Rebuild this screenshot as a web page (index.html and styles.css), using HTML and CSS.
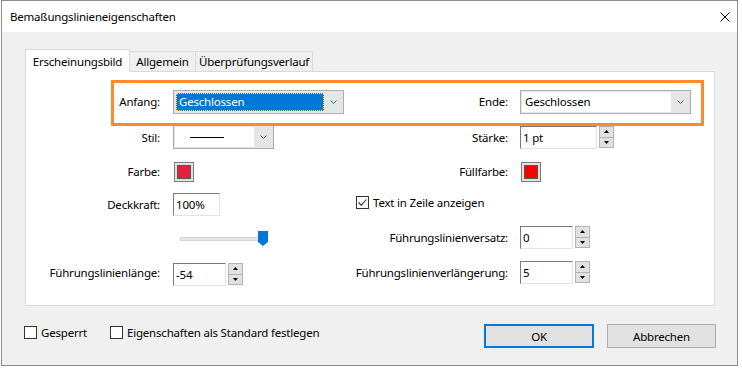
FILE: index.html
```html
<!DOCTYPE html>
<html lang="de">
<head>
    <meta charset="UTF-8">
    <title>Bemaßungslinieneigenschaften</title>
    <link rel="stylesheet" href="styles.css">
</head>
<body>
    <div class="window">
        <div class="titlebar">
            <span class="title">Bemaßungslinieneigenschaften</span>
            <svg class="close" width="10" height="10" viewBox="0 0 10 10">
                <path d="M0.5 0.5L9.5 9.5M9.5 0.5L0.5 9.5" stroke="#000" stroke-width="1" fill="none"/>
            </svg>
        </div>

        <div class="content">
            <!-- tab strip -->
            <div class="tabs">
                <div class="tab active" style="width: 105px">Erscheinungsbild</div>
                <div class="tab" style="width: 67px">Allgemein</div>
                <div class="tab" style="width: 118px">Überprüfungsverlauf</div>
            </div>

            <div class="panel">
                <div class="form">
                    <!-- row 1: highlighted start / end -->
                    <div class="row-focus">
                        <div class="lbl">Anfang:</div>
                        <div class="select" style="width: 171px">
                            <div class="select-value selected">Geschlossen</div>
                            <div class="select-arrow">
                                <svg width="7" height="4" viewBox="0 0 7 4"><path d="M0.5 0.5L3.5 3.5L6.5 0.5" stroke="#606060" fill="none"/></svg>
                            </div>
                        </div>
                        <div class="lbl lbl-r">Ende:</div>
                        <div class="select" style="width: 171px">
                            <div class="select-value">Geschlossen</div>
                            <div class="select-arrow">
                                <svg width="7" height="4" viewBox="0 0 7 4"><path d="M0.5 0.5L3.5 3.5L6.5 0.5" stroke="#606060" fill="none"/></svg>
                            </div>
                        </div>
                    </div>

                    <!-- row 2 -->
                    <div class="lbl">Stil:</div>
                    <div class="select" style="width: 101px">
                        <div class="select-value line-style"><span class="line-sample"></span></div>
                        <div class="select-arrow">
                            <svg width="7" height="4" viewBox="0 0 7 4"><path d="M0.5 0.5L3.5 3.5L6.5 0.5" stroke="#606060" fill="none"/></svg>
                        </div>
                    </div>
                    <div class="lbl lbl-r">Stärke:</div>
                    <div class="spin">
                        <input class="field" type="text" value="1 pt" style="width: 77px">
                        <div class="spin-btns">
                            <div class="spin-btn"><svg width="5" height="3" viewBox="0 0 5 3"><path d="M2.5 0L5 3H0Z" fill="#000"/></svg></div>
                            <div class="spin-btn"><svg width="5" height="3" viewBox="0 0 5 3"><path d="M0 0H5L2.5 3Z" fill="#000"/></svg></div>
                        </div>
                    </div>

                    <!-- row 3 -->
                    <div class="lbl">Farbe:</div>
                    <div class="swatch"><span class="swatch-color" style="background: #e2213c"></span></div>
                    <div class="lbl lbl-r">Füllfarbe:</div>
                    <div class="swatch"><span class="swatch-color" style="background: #ff0000"></span></div>

                    <!-- row 4 -->
                    <div class="lbl">Deckkraft:</div>
                    <div><input class="field" type="text" value="100%" style="width: 47px"></div>
                    <label class="check check-inline">
                        <span class="box">
                            <svg width="11" height="11" viewBox="0 0 11 11"><path d="M1.5 5.5L4.2 8.2L9.5 2.5" stroke="#333" stroke-width="1.1" fill="none"/></svg>
                        </span>
                        Text in Zeile anzeigen
                    </label>

                    <!-- row 5 -->
                    <div class="slider">
                        <div class="track"></div>
                        <svg class="thumb" width="10" height="15" viewBox="0 0 10 15"><path d="M0 0H10V11L5 15L0 11Z" fill="#0078d7"/></svg>
                    </div>
                    <div class="lbl lbl-r">Führungslinienversatz:</div>
                    <div class="spin">
                        <input class="field" type="text" value="0" style="width: 53px">
                        <div class="spin-btns">
                            <div class="spin-btn"><svg width="5" height="3" viewBox="0 0 5 3"><path d="M2.5 0L5 3H0Z" fill="#000"/></svg></div>
                            <div class="spin-btn"><svg width="5" height="3" viewBox="0 0 5 3"><path d="M0 0H5L2.5 3Z" fill="#000"/></svg></div>
                        </div>
                    </div>

                    <!-- row 6 -->
                    <div class="lbl">Führungslinienlänge:</div>
                    <div class="spin spin-low">
                        <input class="field" type="text" value="-54" style="width: 53px">
                        <div class="spin-btns">
                            <div class="spin-btn"><svg width="5" height="3" viewBox="0 0 5 3"><path d="M2.5 0L5 3H0Z" fill="#000"/></svg></div>
                            <div class="spin-btn"><svg width="5" height="3" viewBox="0 0 5 3"><path d="M0 0H5L2.5 3Z" fill="#000"/></svg></div>
                        </div>
                    </div>
                    <div class="lbl lbl-r">Führungslinienverlängerung:</div>
                    <div class="spin">
                        <input class="field" type="text" value="5" style="width: 53px">
                        <div class="spin-btns">
                            <div class="spin-btn"><svg width="5" height="3" viewBox="0 0 5 3"><path d="M2.5 0L5 3H0Z" fill="#000"/></svg></div>
                            <div class="spin-btn"><svg width="5" height="3" viewBox="0 0 5 3"><path d="M0 0H5L2.5 3Z" fill="#000"/></svg></div>
                        </div>
                    </div>
                </div>
            </div>

            <!-- bottom bar -->
            <div class="footer">
                <label class="check"><span class="box"></span>Gesperrt</label>
                <label class="check"><span class="box"></span>Eigenschaften als Standard festlegen</label>
                <div class="buttons">
                    <button class="btn btn-default">OK</button>
                    <button class="btn">Abbrechen</button>
                </div>
            </div>
        </div>
    </div>
</body>
</html>
```

FILE: styles.css
```css
* { box-sizing: border-box; }

body {
    margin: 0;
    background: #fff;
    font-family: "Noto Sans", "Segoe UI", sans-serif;
    font-size: 11.5px;
    letter-spacing: -0.2px;
    color: #000;
}

.window {
    margin-left: 1px;
    width: 737px;
    height: 366px;
    border: 1px solid #8c8c8c;
    background: #f0f0f0;
    display: flex;
    flex-direction: column;
}

.titlebar {
    height: 31px;
    flex-shrink: 0;
    background: #fff;
    display: flex;
    align-items: center;
    justify-content: space-between;
    padding: 0 7px 0 8px;
}

.content {
    flex: 1;
    padding: 17px 22px 0 23px;
}

/* tabs */
.tabs {
    display: flex;
    align-items: flex-end;
    height: 22px;
}

.tab {
    height: 20px;
    margin-left: -1px;
    border: 1px solid #d9d9d9;
    border-bottom: none;
    background: #f0f0f0;
    display: flex;
    align-items: center;
    justify-content: center;
    white-space: nowrap;
}

.tab.active {
    height: 23px;
    margin-left: 0;
    margin-bottom: -1px;
    background: #fff;
    position: relative;
    z-index: 1;
}

.panel {
    height: 235px;
    background: #fff;
    border: 1px solid #d9d9d9;
    padding-top: 12px;
}

/* form grid */
.form {
    display: grid;
    grid-template-columns: 147px 172px 175px 1fr;
    grid-template-rows: 35px 36px 33px 33px 32px 38px;
    align-items: center;
}

.row-focus {
    grid-column: 1 / -1;
    display: grid;
    grid-template-columns: 147px 172px 175px 1fr;
    align-items: center;
    height: 100%;
    position: relative;
}

.row-focus::before {
    content: "";
    position: absolute;
    left: 85px;
    right: 10px;
    top: -4px;
    height: 40px;
    border: 3px solid #fd8a2d;
    pointer-events: none;
}

.lbl {
    text-align: right;
    padding-right: 13px;
    white-space: nowrap;
}

.lbl-r { padding-right: 12px; }

/* combo boxes */
.select {
    height: 24px;
    border: 1px solid #adadad;
    background: #e5e5e5;
    display: flex;
    padding: 1px 0 1px 1px;
}

.select-value {
    flex: 1;
    background: #fff;
    padding: 0 3px;
    display: flex;
    align-items: center;
    white-space: nowrap;
}

.select-value.selected {
    background: #0078d7;
    color: #fff;
    outline: 1px dotted #f6d98a;
    outline-offset: -1px;
    margin: 1px 0 1px 1px;
}

.select-arrow {
    width: 19px;
    display: flex;
    align-items: center;
    justify-content: center;
}

.line-style { padding-left: 15px; }

.line-sample {
    width: 34px;
    height: 1px;
    background: #000;
}

/* text fields + spinners */
.field {
    height: 23px;
    margin: 0;
    border: 1px solid;
    border-color: #7a7a7a #e3e3e3 #e3e3e3 #7a7a7a;
    padding: 0 2px;
    font: inherit;
    letter-spacing: inherit;
    color: #000;
    background: #fff;
    outline: none;
}

.spin {
    display: flex;
    align-items: center;
    gap: 2px;
}

.spin-low { margin-top: 4px; }

.spin-btns {
    width: 15px;
    height: 22px;
    display: flex;
    flex-direction: column;
}

.spin-btn {
    flex: 1;
    border: 1px solid #b4b4b4;
    background: #e1e1e1;
    display: flex;
    align-items: center;
    justify-content: center;
}

.spin-btn + .spin-btn { border-top: none; }

/* colour swatches */
.swatch {
    width: 20px;
    height: 20px;
    margin-left: 1px;
    border: 1px solid #7a7a7a;
    background: #e1e1e1;
    padding: 2px;
}

.swatch-color {
    display: block;
    width: 100%;
    height: 100%;
    border: 1px solid #555;
}

/* checkboxes */
.check {
    display: flex;
    align-items: center;
    gap: 4px;
    white-space: nowrap;
}

.check-inline {
    grid-column: 3 / 5;
    padding-left: 11px;
    margin-top: -4px;
}

.box {
    width: 13px;
    height: 13px;
    border: 1px solid #333;
    background: #fff;
    display: flex;
    align-items: center;
    justify-content: center;
}

/* slider */
.slider {
    grid-column: 2;
    width: 88px;
    margin-left: 7px;
    display: flex;
    align-items: center;
    margin-top: 3px;
}

.track {
    flex: 1;
    height: 4px;
    margin-right: -5px;
    background: #e7e7e7;
    border: 1px solid #d6d6d6;
}

.thumb { position: relative; }

/* footer */
.footer {
    display: flex;
    align-items: flex-start;
    gap: 23px;
    padding-top: 18px;
    margin-left: -1px;
}

.footer .check { height: 16px; }

.buttons {
    margin-left: auto;
    margin-right: -1px;
    display: flex;
    gap: 13px;
}

.btn {
    width: 109px;
    height: 24px;
    border: 1px solid #adadad;
    background: #e1e1e1;
    font: inherit;
    letter-spacing: inherit;
    color: #000;
    padding: 0;
}

.btn-default {
    width: 110px;
    border: 2px solid #0078d7;
}
```
